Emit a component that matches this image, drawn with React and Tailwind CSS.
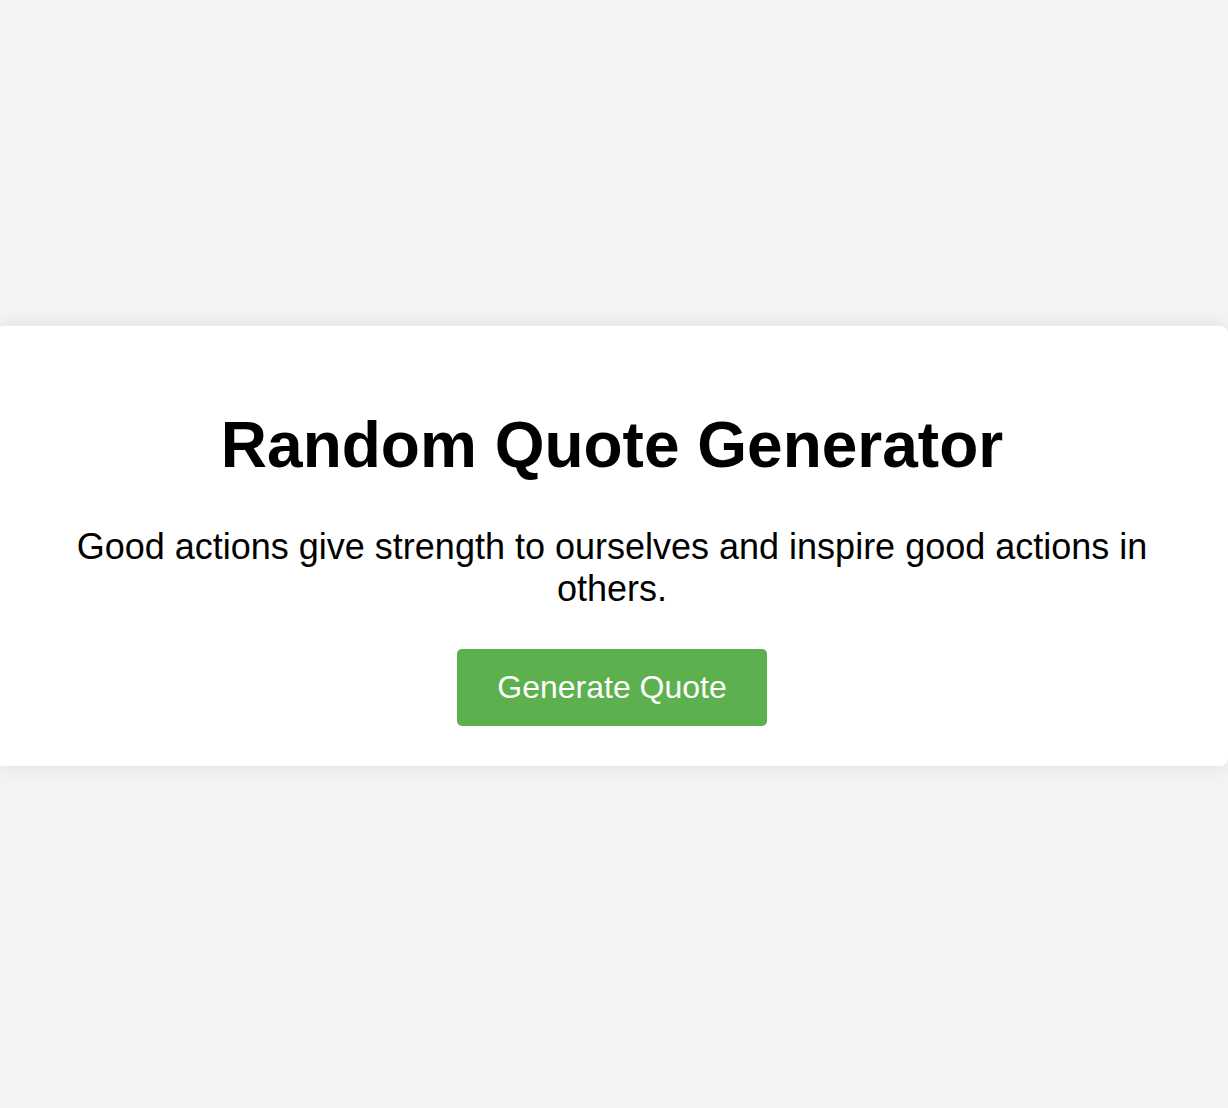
import React, { useState } from 'react';

const QUOTES = [
  'Good actions give strength to ourselves and inspire good actions in others.',
  'The best way to predict the future is to create it.',
  'Act as if what you do makes a difference. It does.',
  'Well done is better than well said.',
];

const App = () => {
  const [index, setIndex] = useState(0);

  const nextQuote = () => {
    setIndex((i) => (i + 1) % QUOTES.length);
  };

  return (
    <div
      className="min-h-screen bg-[#f4f4f4] flex items-center pb-4 overflow-hidden"
      style={{ fontFamily: '"Liberation Sans", Arial, sans-serif' }}
    >
      <div className="w-[calc(100%+4px)] shrink-0 -ml-1 bg-white rounded-lg shadow-[0_0_20px_rgba(0,0,0,0.1)] px-10 py-10 text-center text-black">
        <h1 className="text-[64px] leading-[1.15] font-bold mt-[43px] mb-[44px]">Random Quote Generator</h1>
        <p className="text-[36px] leading-[1.15] mt-[36px] mb-[40px]">{QUOTES[index]}</p>
        <button
          onClick={nextQuote}
          className="bg-[#5cb04d] text-white text-[32px] leading-[37px] px-10 py-5 rounded-[5px]"
        >
          Generate Quote
        </button>
      </div>
    </div>
  );
};

export default App;
